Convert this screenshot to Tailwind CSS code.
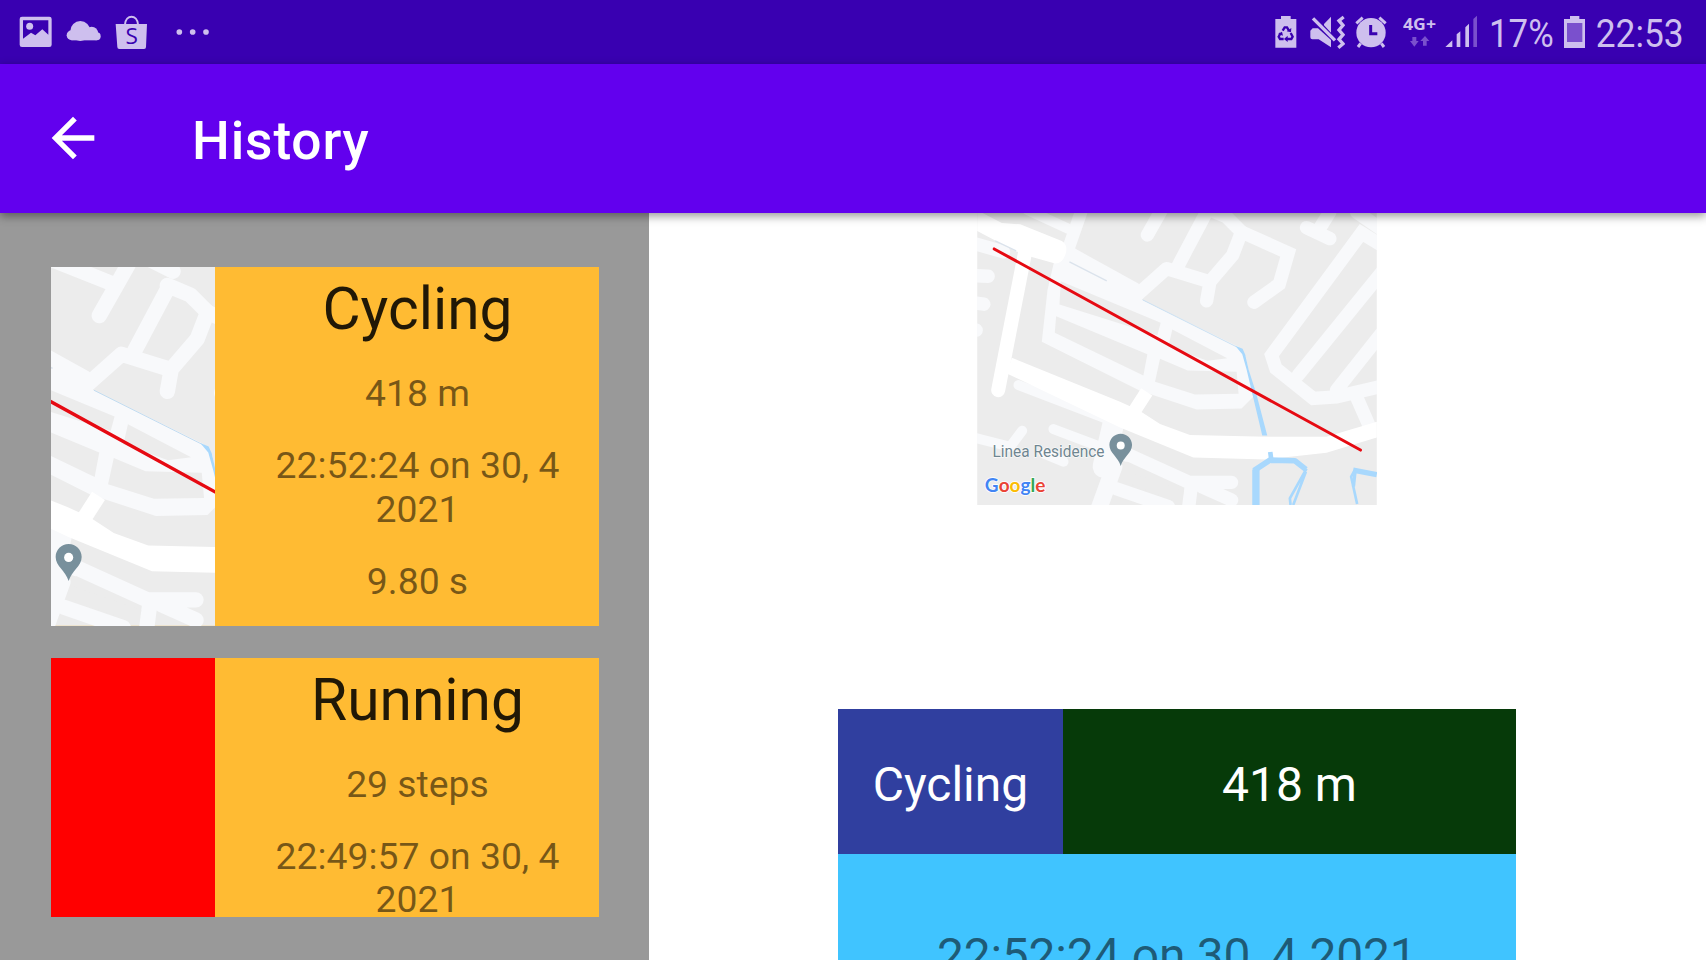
<!DOCTYPE html>
<html lang="en">
<head>
<meta charset="utf-8">
<title>History</title>
<script src="https://cdn.jsdelivr.net/npm/@tailwindcss/browser@4"></script>
</head>
<body class="w-[1706px] h-[960px] overflow-hidden bg-white font-['Roboto',sans-serif] flex flex-col">

<!-- Map artwork shared by the list thumbnail and the detail view -->
<svg class="hidden">
  <symbol id="map" viewBox="51 -28 1200 943">
    <rect x="51" y="-28" width="1200" height="943" fill="#ececec"/>
    <g fill="none" stroke="#f8f9fb" stroke-width="40" stroke-linecap="round" stroke-linejoin="round">
      <path d="M638 -30L562 104M400 -58L590 18M690 -45L755 -12"/>
      <path d="M740 35L655 195M740 25L800 50L845 95L818 165L745 250M530 285L620 205L750 245L740 302"/>
      <path stroke-linejoin="miter" d="M845 95L985 158L958 252L882 306"/>
      <path d="M1110 35L1076 90M1040 82L1110 115M1190 35L1270 90"/>
      <path stroke-linejoin="miter" d="M1270 138L1205 98L935 465L948 505L1060 595L1130 590L1260 560"/>
      <path d="M1275 205L1015 525M1265 400L1130 570M1190 590L1225 670"/>
      <path d="M51 132L130 155M40 226L84 228M40 308L71 312M30 390L48 390"/>
      <path stroke-width="30" d="M175 555L450 660M40 712L150 740L186 692M280 687L500 770M250 760L310 785"/>
      <path stroke-width="65" d="M460 670L430 800"/>
      <path stroke-width="50" d="M462 800L415 930"/>
      <path d="M500 762L687 847L815 847M469 866L625 920M695 850L685 930M725 860L815 900"/>
      <path stroke-width="30" d="M200 28L330 88"/>
    </g>
    <path fill="#f8f9fb" d="M348 20L385 30L345 145L535 250L560 275L545 298L835 440L858 470L880 590L845 625L710 628L540 572L245 425L262 270L285 170L310 130Z"/>
    <path fill="#ececec" d="M302 243L602 368L592 405L298 313ZM637 388L802 474L742 482L625 440ZM288 348L562 462L550 526L284 398ZM600 476L683 511L830 515L836 581L705 583L585 545Z"/>
    <path fill="#ececec" d="M491 811L672 874L660 910L486 843Z"/>
    <path fill="#fff" d="M51 30L125 68L180 72L305 122Q322 132 318 155Q310 190 285 190L215 170L165 152L51 92Z"/>
    <path fill="#fff" d="M155 473L480 605L535 630L600 672L690 705L920 710L1100 710L1251 665V712L1100 758L920 778L700 772L480 682L140 520Z"/>
    <path fill="none" stroke="#fff" stroke-width="42" stroke-linecap="round" d="M194 160L114 570"/>
    <path fill="none" stroke="#fff" stroke-width="40" d="M560 575L512 650"/>
    <path fill="none" stroke="#dbe3ec" stroke-width="4" d="M328 185L440 242M105 122L168 152"/>
    <path fill="none" stroke="#c0dbf0" stroke-width="2.500" d="M548 299L830 440"/>
    <path fill="#a8d8fd" d="M826 437L848 446L856 464L866 508L889 580L922 706H907L877 580L860 508L847 462Z"/>
    <g fill="none" stroke="#a8d8fd">
      <path stroke-width="22" d="M888 915V808"/>
      <path stroke-width="17" stroke-linejoin="round" d="M882 812L930 780L1005 782L1038 808"/>
      <path stroke-width="8" d="M1040 806L990 895L992 915M1038 815L1000 915"/>
      <path stroke-width="14" d="M931 756L935 785"/>
      <path stroke-width="16" d="M1180 810L1251 824"/>
      <path stroke-width="8" d="M1185 810L1174 830L1192 912"/>
      <path stroke-width="10" d="M1186 812L1181 860"/>
    </g>
    <path stroke="#e60a12" stroke-width="9" stroke-linecap="round" d="M102 146L1202 750"/>
    <path fill="#78909c" d="M482 701c-19 0-34 15-34 34 0 24 26 36 34 63 8-27 34-39 34-63 0-19-15-34-34-34z"/>
    <circle cx="482" cy="736" r="12" fill="#fff"/>
    <text x="97" y="770" font-family="Roboto, sans-serif" font-size="47" fill="#6f8590" stroke="#fff" stroke-width="3" paint-order="stroke" textLength="336" lengthAdjust="spacingAndGlyphs">Linea Residence</text>
    <text x="74" y="876" font-family="Lato, sans-serif" font-size="58" font-weight="700" stroke="#fff" stroke-width="5" paint-order="stroke" textLength="182" lengthAdjust="spacingAndGlyphs"><tspan fill="#4285f4">G</tspan><tspan fill="#ea4335">o</tspan><tspan fill="#fbbc05">o</tspan><tspan fill="#4285f4">g</tspan><tspan fill="#34a853">l</tspan><tspan fill="#ea4335">e</tspan></text>
  </symbol>
</svg>

<!-- Status bar -->
<div class="h-16 shrink-0 bg-[#3900b1] flex items-stretch pl-[19px] pr-[22px] text-[#cebfee]">
  <svg class="w-[33px] h-16" viewBox="57 0 99 192" fill="currentColor">
    <path fill-rule="evenodd" d="M66 50H148a7 7 0 0 1 7 7V134a7 7 0 0 1-7 7H66a7 7 0 0 1-7-7V57a7 7 0 0 1 7-7ZM69 61V116L93 98L106 106L127 88L145 104V61Z"/>
    <circle cx="89" cy="79" r="10.500"/>
  </svg>
  <svg class="ml-[14px] w-[35px] h-16" viewBox="198 0 105 192" fill="currentColor">
    <circle cx="215" cy="106" r="15"/><circle cx="241" cy="93" r="30"/><circle cx="275" cy="99" r="19"/><circle cx="290" cy="109" r="12"/>
    <path d="M215 95H290V121H215Z"/>
  </svg>
  <svg class="ml-[14px] w-[33px] h-16" viewBox="345 0 99 192" fill="currentColor">
    <path d="M347 72H441L438 141a6 6 0 0 1-6 6H358a6 6 0 0 1-6-6Z"/>
    <path d="M375 74C377 42 412 42 414 74" fill="none" stroke="currentColor" stroke-width="6"/>
    <text x="395" y="132" text-anchor="middle" font-family="Open Sans, sans-serif" font-size="68" fill="#3900b1">S</text>
  </svg>
  <svg class="ml-[28px] w-[34px] h-16" viewBox="528 0 102 192" fill="currentColor">
    <circle cx="538" cy="96" r="8.500"/><circle cx="578" cy="96" r="8.500"/><circle cx="618" cy="96" r="8.500"/>
  </svg>

  <svg class="ml-auto w-[22px] h-16" viewBox="75 0 66 192" fill="currentColor">
    <path d="M93 48H122V57H139V143H76V57H93Z"/>
    <g fill="none" stroke="#3900b1" stroke-width="7">
      <path d="M98 92L104 82H111L117 92M122 99L128 110L124 117H111M101 117H90L86 110L92 99"/>
    </g>
    <path fill="#3900b1" d="M110 94L123 97L124 84ZM113 107V126L102 117ZM84 102L96 95L99 107Z"/>
  </svg>
  <svg class="ml-[13px] w-[35px] h-16" viewBox="180 0 105 192" fill="currentColor">
    <path d="M181 92L188 85H204L243 120V142L206 118H187a6 6 0 0 1-6-6ZM243 50V98L222 76V72Z"/>
    <path d="M189 55L255 121" fill="none" stroke="currentColor" stroke-width="10"/>
    <path d="M281 51L267 62L279 76L267 90L279 104L267 118L279 131L265 143" fill="none" stroke="currentColor" stroke-width="10"/>
  </svg>
  <svg class="ml-[10px] w-[32px] h-16" viewBox="315 0 96 192" fill="currentColor">
    <circle cx="363" cy="98" r="44"/>
    <path d="M319 70L338 53M407 70L388 53M332 130L324 141M394 130L402 141" fill="none" stroke="currentColor" stroke-width="9"/>
    <path d="M362 75V101H382" fill="none" stroke="#3900b1" stroke-width="9"/>
  </svg>
  <svg class="ml-[16px] w-[33px] h-16" viewBox="459 0 99 192" fill="currentColor">
    <text x="459" y="91" font-family="Open Sans, sans-serif" font-weight="700" font-size="46" textLength="99" lengthAdjust="spacingAndGlyphs">4G+</text>
    <path fill="#7a50cd" d="M487 111H499V123H506L493 140L480 123H487ZM519 137H530V123H538L525 108L511 123H519Z"/>
  </svg>
  <svg class="ml-[9px] w-[33px] h-16" viewBox="585 0 99 192" fill="currentColor">
    <path d="M586 141L607 121V141ZM620 103L631 94V141H620ZM646 82L657 71V141H646Z"/>
    <path fill="#7a50cd" d="M670 57L681 47V141H670Z"/>
  </svg>
  <svg class="ml-[11px] w-[65px] h-16" viewBox="717 0 195 192" fill="currentColor">
    <text x="717" y="141" font-family="Roboto, sans-serif" font-size="118" textLength="194" lengthAdjust="spacingAndGlyphs">17%</text>
  </svg>
  <svg class="ml-[10px] w-[21px] h-16" viewBox="942 0 63 192" fill="currentColor">
    <path d="M960 48H988V57H1005V144H942V57H960Z"/>
    <path fill="#7a50cd" d="M951 69H997V126H951Z"/>
  </svg>
  <svg class="ml-[10px] w-[89px] h-16" viewBox="1035 0 267 192" fill="currentColor">
    <text x="1037" y="141" font-family="Roboto, sans-serif" font-size="118" textLength="264" lengthAdjust="spacingAndGlyphs">22:53</text>
  </svg>
</div>

<!-- App bar -->
<header class="relative z-10 h-[149px] shrink-0 bg-[#6200ee] shadow-[0_3px_9px_rgba(0,0,0,0.42)] flex items-center pl-[41px] text-white">
  <svg class="size-16 mb-[2px]" viewBox="0 0 24 24" fill="currentColor"><path d="M20 11H7.830l5.590-5.590L12 4l-8 8 8 8 1.410-1.410L7.830 13H20v-2z"/></svg>
  <h1 class="ml-[87px] pt-[5px] text-[53.300px] leading-[62px] font-medium tracking-[0.850px]">History</h1>
</header>

<main class="flex flex-1 min-h-0">
  <!-- Activity list -->
  <section class="w-[649.400px] shrink-0 bg-[#999] pt-[53.600px] pl-[50.600px] pr-[50.400px] flex flex-col gap-8">
    <article class="flex h-[359px] shrink-0 overflow-hidden bg-[#ffbb33]">
      <svg class="w-[164.400px] h-full shrink-0"><use href="#map" x="-147.200" y="-2" width="459" height="361"/></svg>
      <div class="flex-1 pt-2 pl-[37px] pr-4 flex flex-col gap-[28.300px] text-center text-[37.330px] leading-[43.700px] text-black/54">
        <h2 class="text-[58.670px] leading-[69px] text-black/87">Cycling</h2>
        <p>418 m</p>
        <p>22:52:24 on 30, 4 2021</p>
        <p>9.80 s</p>
      </div>
    </article>
    <article class="flex h-[259.400px] shrink-0 overflow-hidden bg-[#ffbb33]">
      <div class="w-[164.400px] shrink-0 bg-[#ff0000]"></div>
      <div class="flex-1 pt-2 pl-[37px] pr-4 flex flex-col gap-[28.300px] text-center text-[37.330px] leading-[43.500px] text-black/54">
        <h2 class="text-[58.670px] leading-[69px] text-black/87">Running</h2>
        <p>29 steps</p>
        <p>22:49:57 on 30, 4 2021</p>
      </div>
    </article>
  </section>

  <!-- Selected activity -->
  <section class="flex-1 flex flex-col items-center pr-[2px]">
    <svg class="-mt-[22.500px] w-[400px] h-[314px] shrink-0"><use href="#map" width="400" height="314"/></svg>
    <div class="mt-[204.500px] w-[678px] flex flex-col text-[48px] leading-[56px]">
      <div class="flex h-[145px] shrink-0 text-white text-center">
        <div class="w-[225.500px] bg-[#303f9f] flex items-center justify-center pt-[6px]">Cycling</div>
        <div class="flex-1 bg-[#063a09] flex items-center justify-center pt-[6px]">418 m</div>
      </div>
      <div class="h-[144px] shrink-0 bg-[#40c4ff] pt-[74px] text-center text-black/54 tracking-[-0.250px]">22:52:24 on 30, 4 2021</div>
    </div>
  </section>
</main>
</body>
</html>
